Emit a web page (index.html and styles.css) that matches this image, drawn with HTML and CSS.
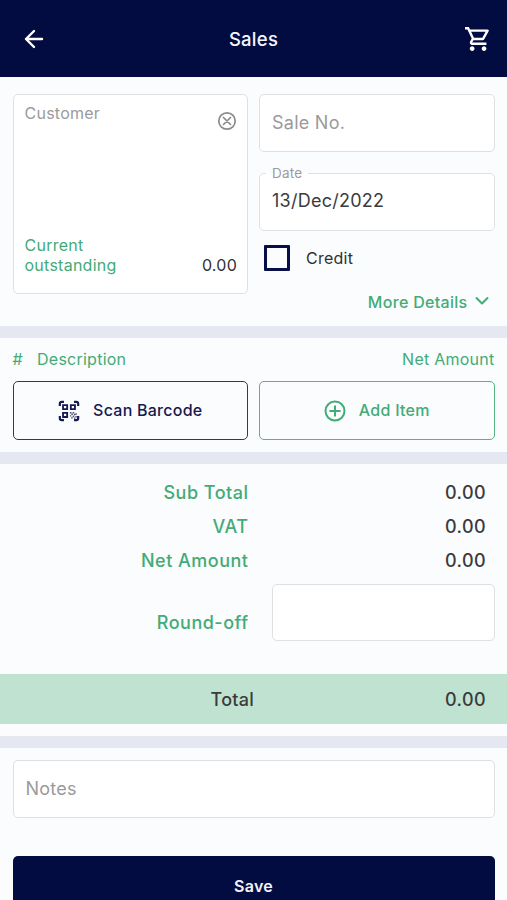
FILE: index.html
```html
<!DOCTYPE html>
<html lang="en">
<head>
<meta charset="utf-8">
<meta name="viewport" content="width=device-width, initial-scale=1">
<title>Sales</title>
<link rel="stylesheet" href="styles.css">
</head>
<body>
<header class="app-bar">
  <svg class="back" viewBox="0 0 20 20" width="20" height="20"><path d="M18 10H2M10 2L2 10l8 8"/></svg>
  <h1 class="title">Sales</h1>
  <svg class="cart" viewBox="1 2 21 20" width="25" height="24"><path d="M15.55 13c.75 0 1.41-.41 1.75-1.03l3.58-6.49A.996.996 0 0 0 20.01 4H5.21l-.94-2H1v2h2l3.600 7.590-1.350 2.440C4.520 15.370 5.480 17 7 17h12v-2H7l1.100-2h7.450zM6.160 6h12.150l-2.760 5H8.530L6.160 6zM7 18c-1.100 0-1.990.9-1.990 2S5.900 22 7 22s2-.9 2-2-.9-2-2-2zm10 0c-1.100 0-1.990.9-1.990 2s.89 2 1.990 2 2-.9 2-2-.9-2-2-2z"/></svg>
</header>
<main>
  <section class="details">
    <div class="box customer">
      <div class="customer-head"><span class="muted">Customer</span>
        <svg class="clear" viewBox="0 0 20 20" width="20" height="20"><circle cx="10" cy="10" r="8.200"/><path d="M6.500 6.500l7 7M13.500 6.500l-7 7"/></svg>
      </div>
      <div class="customer-foot"><span class="green">Current<br>outstanding</span><span class="amount">0.00</span></div>
    </div>
    <div class="fields">
      <div class="box field muted">Sale No.</div>
      <fieldset class="date"><legend>Date</legend><span>13/Dec/2022</span></fieldset>
      <label class="credit"><span class="check"></span><span>Credit</span></label>
      <a class="more"><span>More Details</span><svg viewBox="0 0 14 10" width="14" height="10"><path d="M1.500 2l5.500 5.500L12.500 2"/></svg></a>
    </div>
  </section>
  <div class="divider"></div>
  <section class="items">
    <div class="items-head"><span class="hash">#</span><span class="desc">Description</span><span>Net Amount</span></div>
    <div class="actions">
      <button class="btn scan">
        <svg viewBox="0 0 24 24" width="22" height="22">
          <path class="corner" d="M2 6.500V4q0-2 2-2h2.500M17.500 2H20q2 0 2 2v2.500M22 17.500V20q0 2-2 2h-2.500M6.500 22H4q-2 0-2-2v-2.500"/>
          <path class="cell" d="M5.500 5.500h4.500v4.500H5.500zM14 5.500h4.500v4.500H14zM5.500 14h4.500v4.500H5.500z"/>
          <path class="dots" d="M13 13h1.700v1.700H13zM16 13h1.700v1.700H16zM19 14.500h1.500v1.500H19zM14.500 14.700h1.700v1.700h-1.700zM17.500 15h1.500v1.700h-1.500zM13 16.500h1.500v1.500H13zM16 17h1.700v1.700H16zM19 17.500h1.500v1.500H19zM14.300 18.700h1.700v1.500h-1.700zM17.500 19h1.500v1.500h-1.500z"/>
        </svg><span>Scan Barcode</span>
      </button>
      <button class="btn add">
        <svg viewBox="0 0 22 22" width="22" height="22"><circle cx="11" cy="11" r="9.500"/><path d="M11 6.200v9.600M6.200 11h9.600"/></svg><span>Add Item</span>
      </button>
    </div>
  </section>
  <div class="divider"></div>
  <section class="totals">
    <div class="row"><span class="label">Sub Total</span><span class="value">0.00</span></div>
    <div class="row"><span class="label">VAT</span><span class="value">0.00</span></div>
    <div class="row"><span class="label">Net Amount</span><span class="value">0.00</span></div>
    <div class="row round"><span class="label">Round-off</span><div class="box round-input"></div></div>
  </section>
  <div class="total"><span>Total</span><span class="value">0.00</span></div>
  <div class="divider"></div>
  <section class="notes">
    <div class="box field muted">Notes</div>
    <button class="save">Save</button>
  </section>
</main>
</body>
</html>
```
FILE: styles.css
```css
* { box-sizing: border-box; }
html { height: 100%; overflow: hidden; }
body {
  margin: 0;
  height: 900px;
  overflow: hidden;
  background: #fafcfd;
  color: #3b3b3d;
  font-family: Inter, "Liberation Sans", sans-serif;
  font-size: 16px;
  line-height: 20px;
  letter-spacing: 0.25px;
}
svg { display: block; flex: none; }
button { font: inherit; letter-spacing: inherit; margin: 0; padding: 0; }

.app-bar {
  height: 76.500px;
  padding: 1px 17px 0;
  display: grid;
  grid-template-columns: 1fr auto 1fr;
  align-items: center;
  background: #030c41;
  color: #f5f6fb;
}
.title { margin: 0; font-size: 18.500px; font-weight: 500; line-height: 24px; }
.back { margin-left: 7px; fill: none; stroke: #fff; stroke-width: 2.400; stroke-linecap: round; stroke-linejoin: round; }
.cart { fill: #fff; justify-self: end; }

.box { background: #fff; border: 1px solid #dfe0e3; border-radius: 5px; }
.muted { color: #9a9a9c; }
.green { color: #43ab77; }

.details {
  height: 249.500px;
  padding: 17.500px 12.500px 0;
  display: grid;
  grid-template-columns: 235.500px 235.500px;
  column-gap: 11px;
  align-items: start;
}
.customer {
  height: 200px;
  padding: 8px 10px 18px 11px;
  display: flex;
  flex-direction: column;
  justify-content: space-between;
}
.customer-head { display: flex; justify-content: space-between; }
.clear { margin-top: 8px; fill: none; stroke: #8b8b8d; stroke-width: 1.700; stroke-linecap: round; }
.customer-foot { display: flex; justify-content: space-between; align-items: flex-end; }
.amount { color: #303032; }
.field { height: 58px; padding: 0 12px 1px; display: flex; align-items: center; font-size: 18px; }
.date {
  height: 66px;
  margin: 13px 0 0;
  padding: 0 12px;
  min-width: 0;
  border: 1px solid #dfe0e3;
  border-radius: 5px;
  background: #fff;
  font-size: 18px;
}
.date legend { padding: 0 6px; margin-left: -6px; font-size: 13.500px; line-height: 16px; color: #9a9a9c; }
.date span { display: block; margin-top: 10px; }
.credit { margin: 14px 0 0 5px; height: 26px; display: flex; align-items: center; gap: 16px; color: #303032; }
.check { width: 26px; height: 26px; border: 3px solid #080e47; border-radius: 1px; }
.more {
  margin: 21px 6px 0 0;
  display: flex;
  align-items: center;
  justify-content: flex-end;
  gap: 7px;
  height: 20px;
  font-weight: 500;
  letter-spacing: 0.3px;
  color: #43ab77;
}
.more svg { margin-top: -3px; fill: none; stroke: #43ab77; stroke-width: 2; stroke-linecap: round; stroke-linejoin: round; }

.divider { height: 12px; background: #e5e7f1; }

.items { height: 114px; padding: 11px 12.500px 0; }
.items-head { display: flex; color: #43ab77; }
.hash { width: 24.500px; }
.desc { flex: 1; }
.actions { display: grid; grid-template-columns: 235.500px 235.500px; column-gap: 11px; margin-top: 12px; }
.btn {
  height: 59px;
  padding-bottom: 1px;
  display: flex;
  align-items: center;
  justify-content: center;
  gap: 13px;
  border-radius: 5px;
  background: transparent;
  font-weight: 500;
}
.btn svg { margin-top: 1px; }
.scan { border: 1.500px solid #35355f; color: #171a50; }
.add { border: 1.500px solid #58b385; color: #43ab77; }
.add svg { fill: none; stroke: #43ab77; stroke-width: 2; stroke-linecap: round; }
.corner { fill: none; stroke: #171a50; stroke-width: 2.400; }
.cell { fill: none; stroke: #171a50; stroke-width: 2; }
.dots { fill: #171a50; opacity: 0.75; }

.totals { height: 210px; padding: 12px 12px 0; }
.row { display: grid; grid-template-columns: 236.500px 1fr; height: 34px; line-height: 34px; font-size: 18px; font-weight: 500; letter-spacing: 0.5px; }
.label { text-align: right; color: #43ab77; }
.value { text-align: right; padding-right: 9px; letter-spacing: 0.4px; }
.round { height: 62px; padding-top: 6px; column-gap: 23.500px; }
.round .label { padding-top: 22px; }
.round-input { height: 57px; }

.total {
  height: 50px;
  margin-bottom: 12px;
  padding: 2px 12px 0;
  display: grid;
  grid-template-columns: 242px 1fr;
  align-items: center;
  text-align: right;
  font-size: 18px;
  font-weight: 500;
  background: #bfe3d0;
}
.notes { padding: 12px 12.500px 0; }
.save {
  width: 100%;
  height: 60px;
  margin-top: 38px;
  display: block;
  border: 0;
  border-radius: 5px;
  background: #030c41;
  color: #f2f3fa;
  font-weight: 600;
}
```
